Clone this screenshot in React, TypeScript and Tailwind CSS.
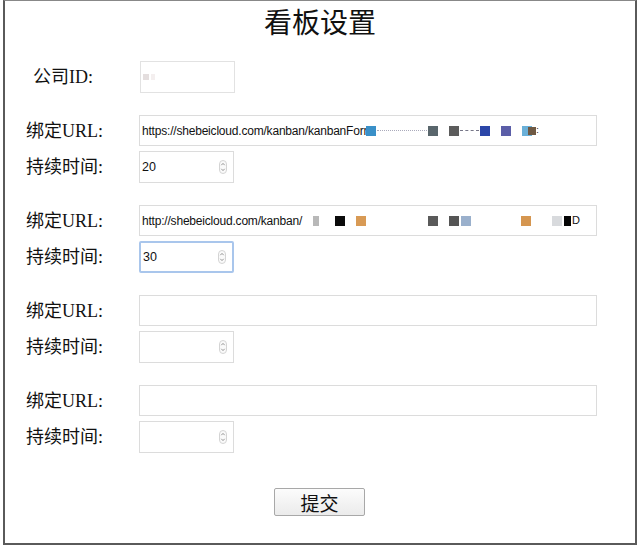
const serif = { fontFamily: '"Liberation Serif", "Noto Sans CJK SC", serif' };

function Spinner() {
  return (
    <svg width="8" height="14" viewBox="0 0 8 14" className="shrink-0">
      <rect x="0.5" y="0.5" width="7" height="13" rx="3.5" fill="#fafafa" stroke="#d4d4d4" />
      <path d="M2.3 5.2 L4 3.4 L5.7 5.2" fill="none" stroke="#8a8a8a" strokeWidth="0.9" />
      <path d="M2.3 8.8 L4 10.6 L5.7 8.8" fill="none" stroke="#8a8a8a" strokeWidth="0.9" />
    </svg>
  );
}

function Blot({ c, w = 10 }: { c: string; w?: number }) {
  return <span className="inline-block h-[10px] mx-[1px] align-middle" style={{ background: c, width: w }} />;
}

function Gap({ w }: { w: number }) {
  return <span className="inline-block" style={{ width: w }} />;
}

function UrlBox({ children }: { children?: React.ReactNode }) {
  return (
    <div className="w-[458px] h-[31px] border border-[#dcdcdc] bg-white flex items-center px-[2px] text-[12px] tracking-[-0.2px] text-[#111] whitespace-nowrap overflow-hidden font-['Liberation_Sans',sans-serif]">
      {children}
    </div>
  );
}

function NumBox({ value, focus }: { value?: string; focus?: boolean }) {
  return (
    <div
      className={
        "w-[95px] h-[32px] bg-white flex items-center justify-between pl-[2px] pr-[6px] text-[12.5px] text-[#111] font-['Liberation_Sans',sans-serif] " +
        (focus ? "border-2 border-[#a9c6ec] rounded-[2px]" : "border border-[#dcdcdc]")
      }
    >
      <span>{value}</span>
      <Spinner />
    </div>
  );
}

function Label({ text }: { text: string }) {
  return (
    <div className="w-[113px] shrink-0 text-[18px] text-[#111] leading-none" style={serif}>
      {text}
    </div>
  );
}

function Group({ url, duration, focus }: { url?: React.ReactNode; duration?: string; focus?: boolean }) {
  return (
    <div className="flex flex-col gap-[5px]">
      <div className="flex items-center">
        <Label text="绑定URL:" />
        <UrlBox>{url}</UrlBox>
      </div>
      <div className="flex items-center">
        <Label text="持续时间:" />
        <NumBox value={duration} focus={focus} />
      </div>
    </div>
  );
}

export default function App() {
  return (
    <div className="w-[640px] h-[547px] bg-white">
      <div className="mx-[3px] w-[634px] h-[545px] border-2 border-[#5a5a5a] border-t border-t-[#888] bg-white flex flex-col">
        <h1 className="text-center text-[28px] leading-none text-[#111] mt-[9px]" style={serif}>
          看板设置
        </h1>
        <div className="flex flex-col gap-[22px] pl-[21px] mt-[23px]">
          <div className="flex items-center">
            <div className="w-[114px] pl-[7px] text-[18px] text-[#111] leading-none" style={serif}>
              公司ID:
            </div>
            <div className="w-[95px] h-[32px] border border-[#e2e2e2] bg-white flex items-center pl-[2px]">
              <span className="inline-block w-[6px] h-[6px] bg-[#e4dede]" />
              <span className="inline-block w-[4px] h-[6px] bg-[#f4efef] ml-[2px]" />
            </div>
          </div>
          <Group
            duration="20"
            url={
              <>
                <span>https://shebeicloud.com/kanban/kanbanForm</span>
                <span className="inline-block w-[10px] h-[10px] bg-[#3a90c8] ml-[-7px] mr-[1px] align-middle" />
                <span className="inline-block w-[50px] border-b border-dotted border-[#aab]" />
                <Blot c="#59666c" />
                <Gap w={9} />
                <Blot c="#5c5c5c" />
                <span className="inline-block w-[19px] border-b border-dashed border-[#778]" />
                <Blot c="#2b46a8" />
                <Gap w={9} />
                <Blot c="#5b5ea8" />
                <Gap w={9} />
                <Blot c="#6ab0d8" />
                <span className="inline-block w-[8px] h-[8px] bg-[#6e5944] ml-[-5px] align-middle" />
                <span className="text-[9px]">:</span>
              </>
            }
          />
          <Group
            duration="30"
            focus
            url={
              <>
                <span>http://shebeicloud.com/kanban/</span>
                <Gap w={10} />
                <Blot c="#b8b8b8" w={6} />
                <Gap w={14} />
                <Blot c="#0b0b0b" />
                <Gap w={9} />
                <Blot c="#d89a55" />
                <Gap w={60} />
                <Blot c="#5a5a5a" />
                <Gap w={9} />
                <Blot c="#555" />
                <Blot c="#9ab0cc" />
                <Gap w={48} />
                <Blot c="#d59650" />
                <Gap w={19} />
                <Blot c="#d8dadd" />
                <Blot c="#050505" w={7} />
                <span className="text-[11px] leading-none">D</span>
              </>
            }
          />
          <Group />
          <Group />
        </div>
        <div className="pl-[269px] mt-[35px]">
          <button
            className="w-[91px] h-[28px] border border-[#a8a8a8] rounded-[2px] bg-gradient-to-b from-[#fcfcfc] to-[#ebebeb] text-[19px] text-[#111] leading-none"
            style={{ fontFamily: '"Noto Sans CJK SC", sans-serif' }}
          >
            提交
          </button>
        </div>
      </div>
    </div>
  );
}
